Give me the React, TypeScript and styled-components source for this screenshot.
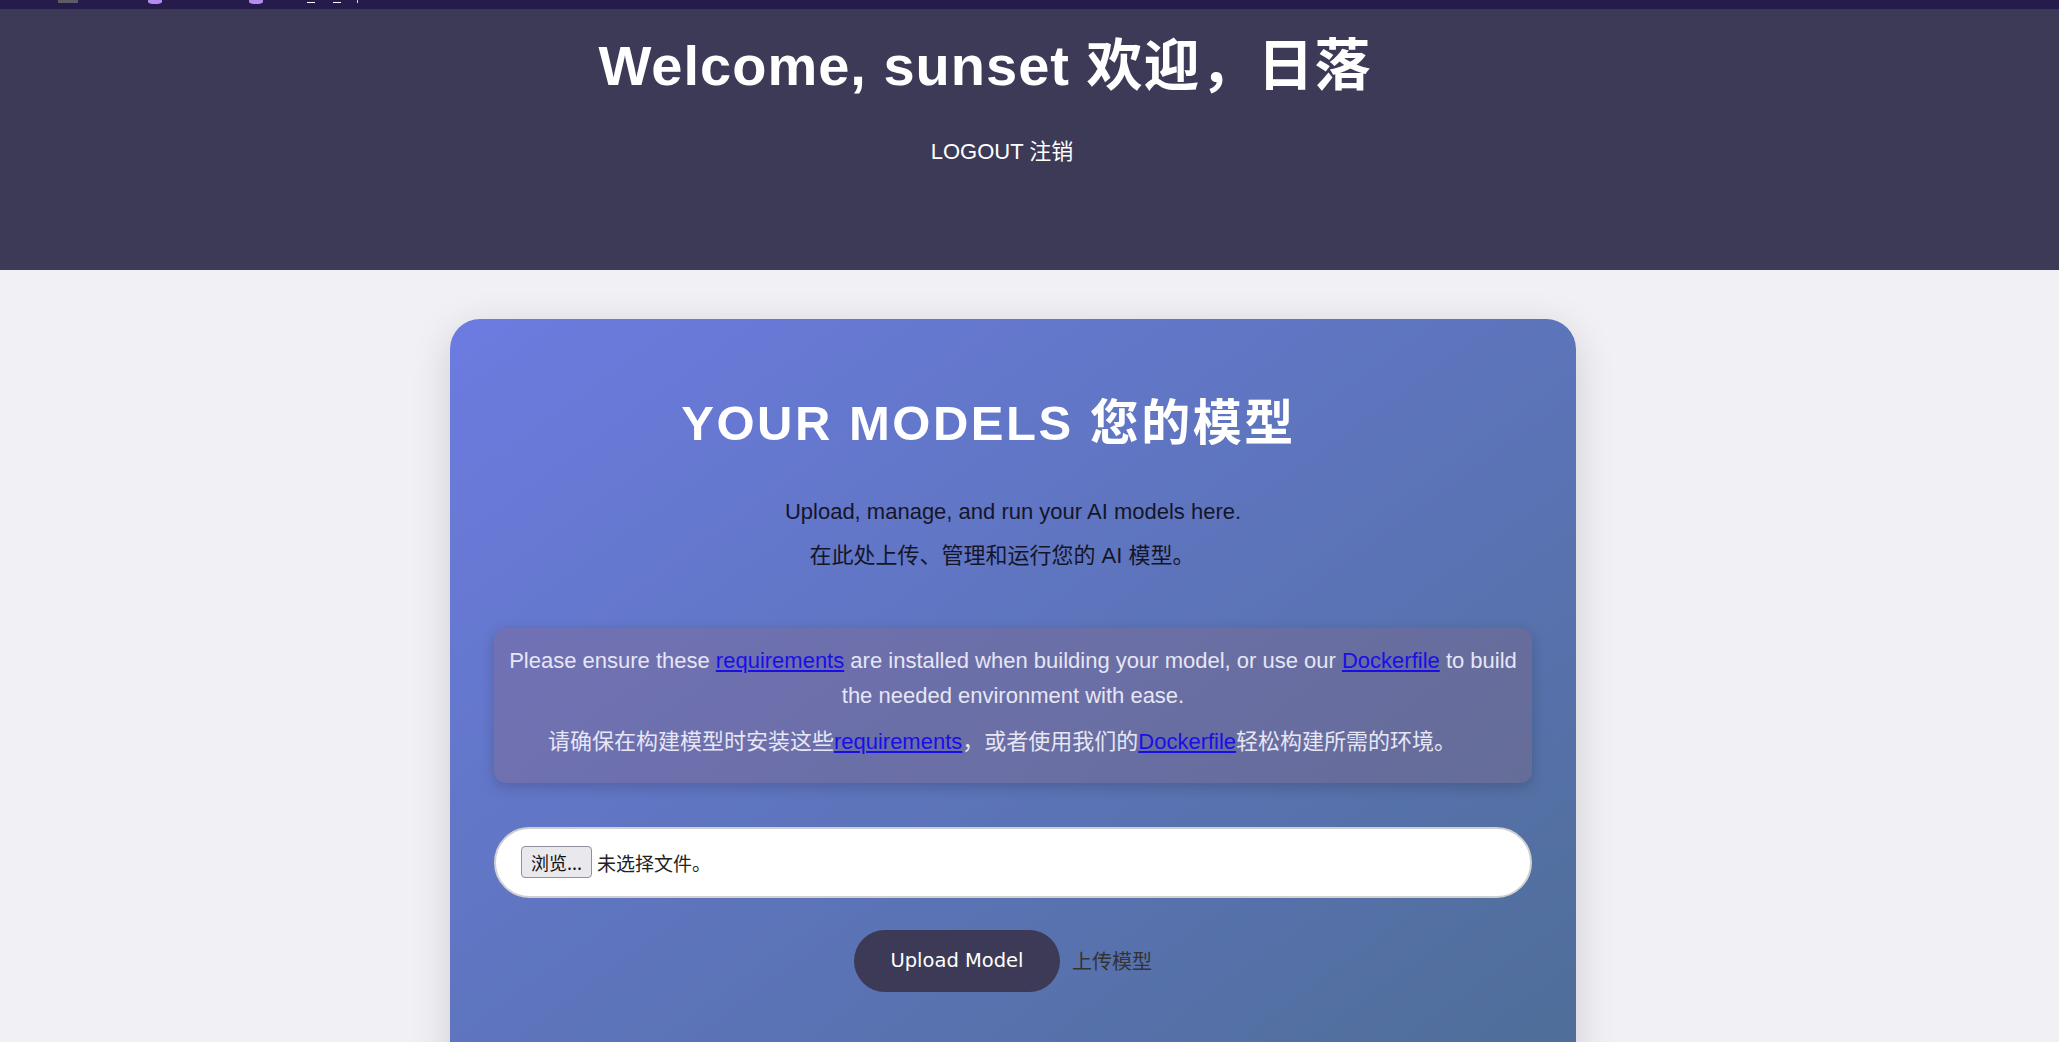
import styled, { createGlobalStyle } from "styled-components";

const GlobalStyle = createGlobalStyle`
  body {
    margin: 0;
    background: #f1f1f5;
    font-family: "Liberation Sans", "Noto Sans CJK SC", sans-serif;
  }
`;

const App = () => {
  return (
    <>
      <GlobalStyle />
      <TopBar>
        <Stub $left={58} $w={20} $h={3} $color="#5c5c66" />
        <Stub $left={70} $w={14} $h={4} $color="#b48cf0" $round />
        <Stub $left={87} $w={14} $h={4} $color="#b48cf0" $round />
        <Stub $left={44} $w={8} $h={1} $top={2} $color="#ffffff" />
        <Stub $left={18} $w={8} $h={1} $top={2} $color="#ffffff" />
        <Stub $left={16} $w={1} $h={3} $color="#d8d0ff" />
      </TopBar>
      <Header>
        <Title>
          Welcome, sunset <Zh>欢迎，日落</Zh>
        </Title>
        <Logout href="#">
          LOGOUT <Zh>注销</Zh>
        </Logout>
      </Header>
      <Main>
        <Card>
          <CardTitle>
            YOUR MODELS <Zh>您的模型</Zh>
          </CardTitle>
          <Intro>
            <p>Upload, manage, and run your AI models here.</p>
            <p>
              <Zh>在此处上传、管理和运行您的 AI 模型。</Zh>
            </p>
          </Intro>
          <InfoBox>
            <p>
              Please ensure these <a href="#">requirements</a> are installed
              when building your model, or use our <a href="#">Dockerfile</a>{" "}
              to build the needed environment with ease.
            </p>
            <p>
              <Zh>
                请确保在构建模型时安装这些<a href="#">requirements</a>
                ，或者使用我们的<a href="#">Dockerfile</a>轻松构建所需的环境。
              </Zh>
            </p>
          </InfoBox>
          <FileField>
            <input type="file" />
            <BrowseButton>浏览...</BrowseButton>
            <FileName>未选择文件。</FileName>
          </FileField>
          <Actions>
            <UploadButton type="button">Upload Model</UploadButton>
            <UploadHint>上传模型</UploadHint>
          </Actions>
        </Card>
      </Main>
    </>
  );
};

const TopBar = styled.div`
  display: flex;
  align-items: flex-start;
  height: 9px;
  background: #261c4c;
  border-bottom: 1px solid #3a3562;
  overflow: hidden;
`;

const Stub = styled.span<{
  $left: number;
  $w: number;
  $h: number;
  $color: string;
  $top?: number;
  $round?: boolean;
}>`
  flex: none;
  margin-left: ${(p) => p.$left}px;
  margin-top: ${(p) => p.$top ?? 0}px;
  width: ${(p) => p.$w}px;
  height: ${(p) => p.$h}px;
  background: ${(p) => p.$color};
  border-radius: ${(p) => (p.$round ? "0 0 50% 50%" : "0")};
`;

const Zh = styled.span`
  font-family: "Liberation Sans", "Noto Sans CJK SC", sans-serif;
  padding-right: 1em;
`;

const Header = styled.header`
  box-sizing: border-box;
  height: 260px;
  padding: 22px 33px 0 0;
  background: #3c3a56;
  color: #ffffff;
  text-align: center;
`;

const Title = styled.h1`
  margin: 0;
  font-size: 56px;
  line-height: 1.2;
  font-weight: 700;
  letter-spacing: 1px;
`;

const Logout = styled.a`
  display: inline-block;
  margin-top: 40px;
  color: #ffffff;
  font-size: 22px;
  line-height: 1.2;
  text-decoration: none;
`;

const Main = styled.main`
  display: flex;
  justify-content: center;
  padding: 49px 33px 0 0;
`;

const Card = styled.section`
  box-sizing: border-box;
  width: 1126px;
  min-height: 820px;
  padding: 44px 44px 60px;
  border-radius: 30px;
  background: linear-gradient(to bottom right, #6c7be0, #4d6d94);
  box-shadow: 0 10px 40px rgba(0, 0, 0, 0.14);
  text-align: center;
`;

const CardTitle = styled.h2`
  margin: 31px 0 0;
  color: #ffffff;
  font-size: 49px;
  line-height: 1.2;
  font-weight: 700;
  letter-spacing: 2.5px;
`;

const Intro = styled.div`
  display: flex;
  flex-direction: column;
  gap: 9px;
  margin-top: 41px;
  color: #15152a;
  font-size: 22px;
  line-height: 35px;

  p {
    margin: 0;
  }
`;

const InfoBox = styled.div`
  display: flex;
  flex-direction: column;
  gap: 11px;
  margin-top: 55px;
  padding: 15px 12px 24px;
  border-radius: 12px;
  background: rgba(140, 100, 120, 0.3);
  box-shadow: 0 4px 14px rgba(0, 0, 0, 0.18);
  color: #e6e6f5;
  font-size: 22px;
  line-height: 35px;

  p {
    margin: 0;
  }

  a {
    color: #1a0ee8;
  }
`;

const FileField = styled.label`
  box-sizing: border-box;
  display: flex;
  align-items: center;
  gap: 5px;
  height: 71px;
  margin-top: 44px;
  padding: 0 25px;
  border: 2px solid #d0d0d0;
  border-radius: 36px;
  background: #ffffff;
  font-family: "DejaVu Sans", "Noto Sans CJK SC", sans-serif;

  input {
    display: none;
  }
`;

const BrowseButton = styled.span`
  box-sizing: border-box;
  display: flex;
  align-items: center;
  justify-content: center;
  width: 71px;
  height: 32px;
  border: 1px solid #8f8f9d;
  border-radius: 4px;
  background: #e9e9ed;
  color: #111111;
  font-family: "Noto Sans CJK SC", sans-serif;
  font-size: 18px;
`;

const FileName = styled.span`
  color: #222222;
  font-family: "Noto Sans CJK SC", sans-serif;
  font-size: 19px;
`;

const Actions = styled.div`
  display: flex;
  justify-content: center;
  align-items: center;
  gap: 12px;
  margin-top: 32px;
`;

const UploadButton = styled.button`
  width: 206px;
  height: 62px;
  border: none;
  border-radius: 31px;
  background: #3c3a56;
  color: #ffffff;
  font-family: "DejaVu Sans", sans-serif;
  font-size: 19.5px;
  cursor: pointer;
`;

const UploadHint = styled.span`
  padding-right: 1em;
  color: #333333;
  font-family: "Noto Sans CJK SC", sans-serif;
  font-size: 20px;
`;

export default App;
